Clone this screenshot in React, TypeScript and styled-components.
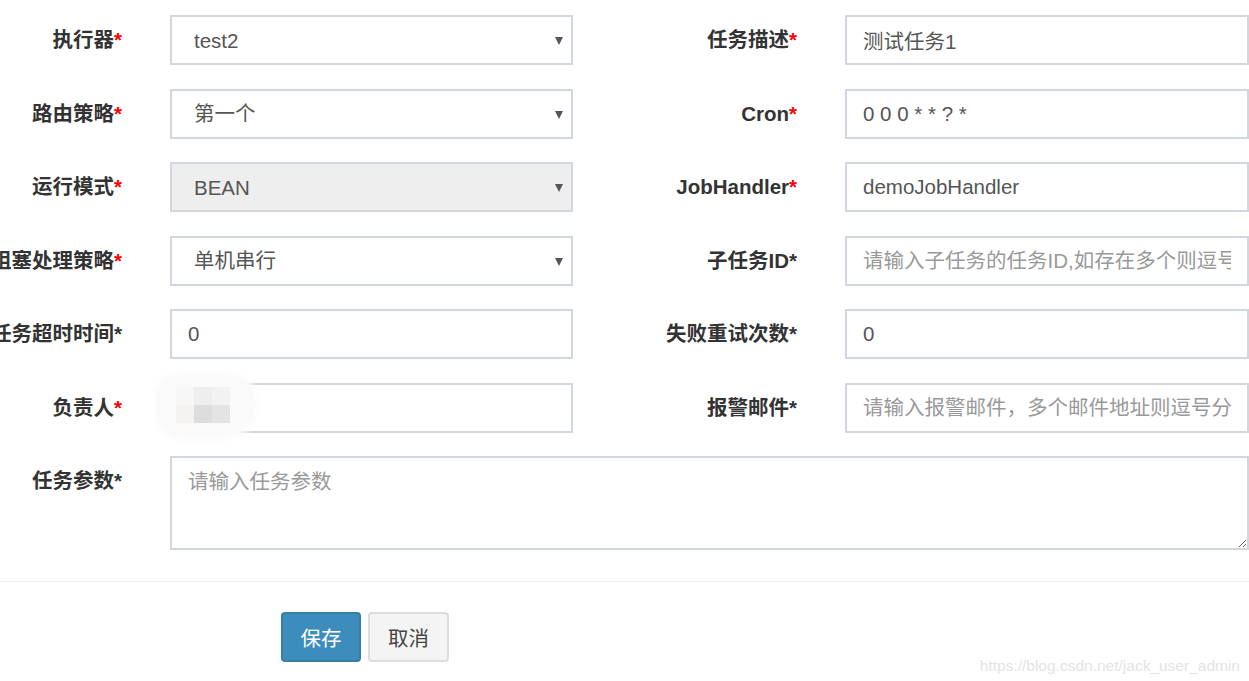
import styled, { createGlobalStyle } from "styled-components";

const GlobalStyle = createGlobalStyle`
  html, body {
    margin: 0;
    padding: 0;
    background: #fff;
  }
  body {
    font-family: "Liberation Sans", "Noto Sans CJK SC", sans-serif;
    overflow: hidden;
  }
  * {
    box-sizing: border-box;
  }
`;

const Page = styled.div`
  position: relative;
  width: 1249px;
  height: 681px;
  overflow: hidden;
  padding-top: 15px;
`;

const Row = styled.div<{ last?: boolean }>`
  display: grid;
  grid-template-columns: 126px 403px 1fr 404px;
  column-gap: 44px;
  margin-bottom: ${(props) => (props.last ? "0" : "23.5px")};
`;

const Label = styled.label`
  display: flex;
  justify-content: flex-end;
  white-space: nowrap;
  padding: 11px 4px 0 0;
  font-size: 20.5px;
  line-height: 28px;
  font-weight: 700;
  color: #333;
`;

const Star = styled.span<{ red?: boolean }>`
  color: ${(props) => (props.red ? "#f00" : "#333")};
`;

const Field = styled.div<{ wide?: boolean }>`
  position: relative;
  grid-column: ${(props) => (props.wide ? "2 / 5" : "auto")};
`;

const TextInput = styled.input`
  display: block;
  width: 100%;
  height: 50px;
  margin: 0;
  padding: 0 16px;
  border: 2px solid #d2d6de;
  border-radius: 0;
  background: #fff;
  font-family: inherit;
  font-size: 20.5px;
  color: #555;
  outline: none;
  &::placeholder {
    color: #999;
  }
`;

const SelectBox = styled.select`
  display: block;
  width: 100%;
  height: 50px;
  margin: 0;
  padding: 0 40px 0 22px;
  border: 2px solid #d2d6de;
  border-radius: 0;
  appearance: none;
  background: #fff;
  font-family: inherit;
  font-size: 20.5px;
  color: #555;
  opacity: 1;
  outline: none;
  &:disabled {
    background: #eee;
    color: #555;
  }
`;

const Arrow = styled.span`
  position: absolute;
  right: 10px;
  top: 22px;
  width: 0;
  height: 0;
  border-left: 4px solid transparent;
  border-right: 4px solid transparent;
  border-top: 8px solid #555;
  pointer-events: none;
`;

const TextArea = styled.textarea`
  display: block;
  width: 100%;
  height: 94px;
  margin: 0;
  padding: 10px 16px;
  border: 2px solid #d2d6de;
  border-radius: 0;
  font-family: inherit;
  font-size: 20.5px;
  line-height: 28px;
  color: #555;
  outline: none;
  &::placeholder {
    color: #999;
  }
`;

const Blur = styled.div`
  position: absolute;
  left: -13px;
  top: -8px;
  width: 98px;
  height: 62px;
  border-radius: 24px 30px 34px 26px;
  background: #fafafa;
  box-shadow: 0 0 6px 4px #fcfcfc;
  display: grid;
  grid-template-columns: 18px 18px 18px;
  grid-template-rows: 18px 18px;
  padding: 12px 0 0 19px;
`;

const Cell = styled.div<{ tone: string }>`
  background: ${(props) => props.tone};
`;

const Footer = styled.div`
  margin-top: 31px;
  border-top: 1px solid #eee;
  padding: 30px 0 0 281px;
  display: flex;
  gap: 7px;
`;

const Button = styled.button<{ primary?: boolean }>`
  height: 50px;
  width: ${(props) => (props.primary ? "80px" : "81px")};
  padding: 0;
  border-radius: 4px;
  border: 2px solid ${(props) => (props.primary ? "#367fa9" : "#ddd")};
  background: ${(props) => (props.primary ? "#3c8dbc" : "#f4f4f4")};
  color: ${(props) => (props.primary ? "#fff" : "#444")};
  font-family: inherit;
  font-size: 20.5px;
`;

const Watermark = styled.div`
  position: absolute;
  right: 9px;
  bottom: 8px;
  font-size: 15.5px;
  line-height: 1;
  color: #e4e4e4;
  white-space: nowrap;
`;

function Select({ value, disabled }: { value: string; disabled?: boolean }) {
  return (
    <Field>
      <SelectBox value={value} disabled={disabled} onChange={() => {}}>
        <option value={value}>{value}</option>
      </SelectBox>
      <Arrow />
    </Field>
  );
}

function FieldLabel({ text, red }: { text: string; red?: boolean }) {
  return (
    <Label>
      <span>
        {text}
        <Star red={red}>*</Star>
      </span>
    </Label>
  );
}

const mosaic = ["#f7f7f7", "#eeeeee", "#f2f2f2", "#f4f3f1", "#dddddd", "#e4e4e4"];

export default function App() {
  return (
    <>
      <GlobalStyle />
      <Page>
        <Row>
          <FieldLabel text="执行器" red />
          <Select value="test2" />
          <FieldLabel text="任务描述" red />
          <Field>
            <TextInput defaultValue="测试任务1" />
          </Field>
        </Row>
        <Row>
          <FieldLabel text="路由策略" red />
          <Select value="第一个" />
          <FieldLabel text="Cron" red />
          <Field>
            <TextInput defaultValue="0 0 0 * * ? *" />
          </Field>
        </Row>
        <Row>
          <FieldLabel text="运行模式" red />
          <Select value="BEAN" disabled />
          <FieldLabel text="JobHandler" red />
          <Field>
            <TextInput defaultValue="demoJobHandler" />
          </Field>
        </Row>
        <Row>
          <FieldLabel text="阻塞处理策略" red />
          <Select value="单机串行" />
          <FieldLabel text="子任务ID" />
          <Field>
            <TextInput placeholder="请输入子任务的任务ID,如存在多个则逗号分隔" />
          </Field>
        </Row>
        <Row>
          <FieldLabel text="任务超时时间" />
          <Field>
            <TextInput defaultValue="0" />
          </Field>
          <FieldLabel text="失败重试次数" />
          <Field>
            <TextInput defaultValue="0" />
          </Field>
        </Row>
        <Row>
          <FieldLabel text="负责人" red />
          <Field>
            <TextInput />
            <Blur>
              {mosaic.map((tone, i) => (
                <Cell key={i} tone={tone} />
              ))}
            </Blur>
          </Field>
          <FieldLabel text="报警邮件" />
          <Field>
            <TextInput placeholder="请输入报警邮件，多个邮件地址则逗号分隔" />
          </Field>
        </Row>
        <Row last>
          <FieldLabel text="任务参数" />
          <Field wide>
            <TextArea placeholder="请输入任务参数" />
          </Field>
        </Row>
        <Footer>
          <Button primary>保存</Button>
          <Button>取消</Button>
        </Footer>
        <Watermark>https://blog.csdn.net/jack_user_admin</Watermark>
      </Page>
    </>
  );
}
